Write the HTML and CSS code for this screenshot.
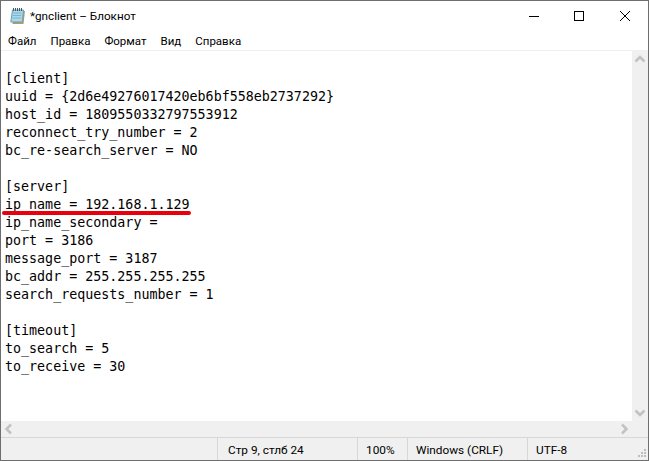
FILE: index.html
```html
<!DOCTYPE html>
<html lang="ru">
<head>
<meta charset="utf-8">
<title>*gnclient – Блокнот</title>
<link rel="stylesheet" href="styles.css">
</head>
<body>
<div class="window">
  <header class="titlebar">
    <svg class="app-icon" width="18" height="18" viewBox="0 0 18 18">
      <path d="M5 4h11l-1.500 13H3.500z" fill="#b79a67"/>
      <path d="M3.500 3h11l-1.200 12H1.800z" fill="#a9d8ea" stroke="#6b9db5"/>
      <path d="M4 6h8.500M3.700 8.500h8.500M3.400 11h8.500" stroke="#7fb4cb"/>
      <path d="M4.500 1v3M6.500 1v3M8.500 1v3M10.500 1v3M12.500 1v3" stroke="#3f5a6a"/>
    </svg>
    <span class="title">*gnclient – Блокнот</span>
    <div class="controls">
      <svg class="control" width="46" height="30" viewBox="0 0 46 30"><path d="M19 15.500h10" stroke="#000"/></svg>
      <svg class="control" width="46" height="30" viewBox="0 0 46 30"><rect x="18.500" y="10.500" width="9" height="9" fill="none" stroke="#000"/></svg>
      <svg class="control" width="46" height="30" viewBox="0 0 46 30"><path d="M18 10l10 10M28 10l-10 10" stroke="#000"/></svg>
    </div>
  </header>
  <nav class="menubar">
    <span class="menu-item">Файл</span>
    <span class="menu-item">Правка</span>
    <span class="menu-item">Формат</span>
    <span class="menu-item">Вид</span>
    <span class="menu-item">Справка</span>
  </nav>
  <div class="editor-row">
    <div class="editor-wrap">
      <pre class="editor">
[client]
uuid = {2d6e49276017420eb6bf558eb2737292}
host_id = 1809550332797553912
reconnect_try_number = 2
bc_re-search_server = NO

[server]
ip_name = 192.168.1.129
ip_name_secondary =
port = 3186
message_port = 3187
bc_addr = 255.255.255.255
search_requests_number = 1

[timeout]
to_search = 5
to_receive = 30</pre>
      <div class="underline"></div>
    </div>
    <div class="vscroll">
      <svg width="16" height="16" viewBox="0 0 16 16"><path d="M3.500 10.500L8 6l4.500 4.500" fill="none" stroke="#c2c2c2" stroke-width="2.500"/></svg>
      <svg width="16" height="16" viewBox="0 0 16 16"><path d="M3.500 5.500L8 10l4.500-4.500" fill="none" stroke="#c2c2c2" stroke-width="2.500"/></svg>
    </div>
  </div>
  <div class="hscroll">
    <svg width="16" height="16" viewBox="0 0 16 16"><path d="M10 3.500L5.500 8l4.500 4.500" fill="none" stroke="#c2c2c2" stroke-width="2.500"/></svg>
    <svg class="arrow-right" width="16" height="16" viewBox="0 0 16 16"><path d="M6 3.500L10.500 8 6 12.500" fill="none" stroke="#c2c2c2" stroke-width="2.500"/></svg>
  </div>
  <footer class="statusbar">
    <div class="cell cell-pos">Стр 9, стлб 24</div>
    <div class="cell cell-zoom">100%</div>
    <div class="cell cell-eol">Windows (CRLF)</div>
    <div class="cell cell-enc">UTF-8</div>
    <svg class="grip" width="12" height="12" viewBox="0 0 12 12"><path d="M8 1h2v2H8zM5 4h2v2H5zM8 4h2v2H8zM2 7h2v2H2zM5 7h2v2H5zM8 7h2v2H8z" fill="#bdbdbd"/></svg>
  </footer>
</div>
</body>
</html>
```
FILE: styles.css
```css
html, body { margin: 0; padding: 0; height: 100%; background: #fff; }
body { overflow: hidden; }
.window {
  box-sizing: border-box;
  width: 649px;
  height: 461px;
  border: 1px solid #6e6e6e;
  display: flex;
  flex-direction: column;
  font-family: Roboto, "Noto Sans", sans-serif;
  color: #000;
}
.titlebar { height: 29px; display: flex; align-items: center; padding-left: 8px; flex: none; }
.app-icon { margin-right: 3px; }
.title { font-size: 11.7px; padding-top: 1px; }
.controls { margin-left: auto; display: flex; }
.control { display: block; }
.menubar { box-sizing: border-box; height: 21px; padding: 2px 0 0 7px; display: flex; align-items: center; gap: 14px; font-size: 11.5px; flex: none; border-bottom: 1px solid #f0f0f0; }
.editor-row { flex: 1; display: flex; min-height: 0; }
.editor-wrap { flex: 1; position: relative; }
.editor { margin: 0; padding: 19px 0 0 4px; font-family: "DejaVu Sans Mono", monospace; font-size: 13.33px; line-height: 18px; }
.underline { position: absolute; left: 1px; top: 160px; width: 189px; height: 4px; background: #e8000b; border-radius: 2px; }
.vscroll { width: 16px; background: #f0f0f0; display: flex; flex-direction: column; justify-content: space-between; }
.hscroll { height: 16px; background: #f0f0f0; display: flex; justify-content: space-between; align-items: center; flex: none; }
.arrow-right { margin-right: 16px; }
.statusbar { height: 23px; flex: none; display: flex; background: #f0f0f0; border-top: 1px solid #d7d7d7; font-size: 11.8px; position: relative; box-sizing: border-box; align-items: center; }
.cell { border-left: 1px solid #d7d7d7; height: 100%; display: flex; align-items: center; box-sizing: border-box; padding: 1px 0 0 8px; }
.cell-pos { margin-left: 216px; width: 140px; padding-left: 10px; }
.cell-zoom { width: 50px; }
.cell-eol { width: 120px; }
.cell-enc { flex: 1; }
.grip { position: absolute; right: 0; bottom: 0; }
```
